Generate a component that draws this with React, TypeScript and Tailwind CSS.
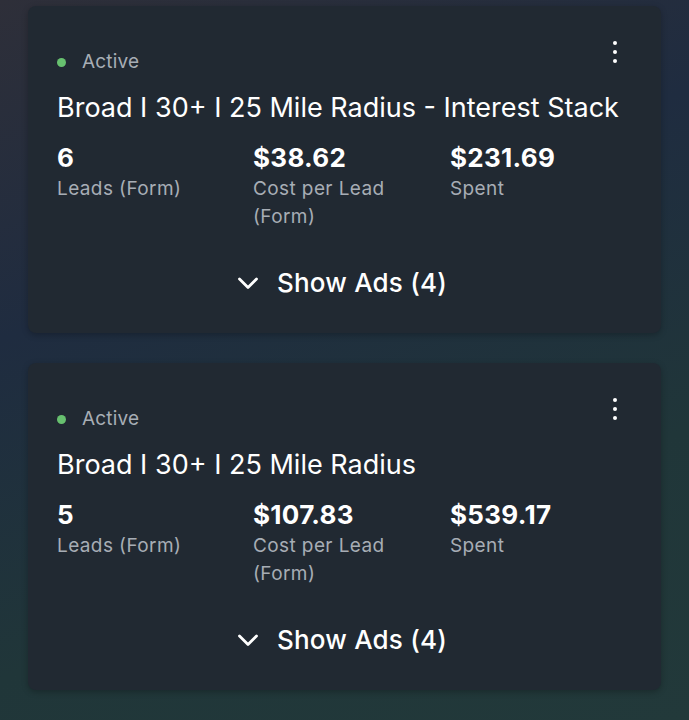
import React from "react";

function Dots() {
  return (
    <div className="absolute right-[44px] top-[35px] flex flex-col items-center gap-[5px]">
      <span className="block h-[4px] w-[4px] rounded-full bg-white" />
      <span className="block h-[4px] w-[4px] rounded-full bg-white" />
      <span className="block h-[4px] w-[4px] rounded-full bg-white" />
    </div>
  );
}

function Chevron() {
  return (
    <svg width="24" height="24" viewBox="0 0 24 24" fill="none" stroke="white" strokeWidth="2.8" strokeLinecap="round" strokeLinejoin="round">
      <path d="M3.5 8l8.5 8.5 8.5-8.5" />
    </svg>
  );
}

type Stat = { value: string; label: string[] };

function Card({ title, stats }: { title: string; stats: Stat[] }) {
  return (
    <div className="relative mx-[28px] h-[327px] rounded-[8px] bg-[#212932] pl-[29px] pt-[44px] shadow-[0_2px_6px_rgba(0,0,0,0.25)]">
      <Dots />
      <div className="flex h-[24px] items-center gap-[16px]">
        <span className="block h-[9px] w-[9px] rounded-full bg-[#67c06f]" />
        <span className="text-[19px] leading-[24px] tracking-[0.2px] text-[#a7adb5]">Active</span>
      </div>
      <div className="mt-[18px] text-[27px] leading-[32px] text-white">{title}</div>
      <div className="mt-[19px] grid grid-cols-[196px_197px_196px]">
        {stats.map((s, i) => (
          <div key={i} className="flex flex-col">
            <span className="mb-[2px] text-[26px] font-bold leading-[30px] tracking-[0.3px] text-white">{s.value}</span>
            {s.label.map((l, j) => (
              <span key={j} className="text-[19px] leading-[28px] tracking-[0.4px] text-[#a7adb5]">
                {l}
              </span>
            ))}
          </div>
        ))}
      </div>
      <div className="absolute bottom-[35px] left-0 right-0 flex items-center justify-center gap-[17px] pr-[6px]">
        <Chevron />
        <span className="text-[26px] font-medium leading-[30px] tracking-[0.2px] text-white">Show Ads (4)</span>
      </div>
    </div>
  );
}

export default function App() {
  return (
    <div
      className="flex h-[720px] w-[689px] flex-col gap-[30px] overflow-hidden bg-[linear-gradient(160deg,#2e2f39_0%,#1f2c40_35%,#203639_70%,#22393a_100%)] pt-[6px]"
      style={{ fontFamily: "Inter, 'Noto Sans', sans-serif" }}
    >
      <Card
        title="Broad I 30+ I 25 Mile Radius - Interest Stack"
        stats={[
          { value: "6", label: ["Leads (Form)"] },
          { value: "$38.62", label: ["Cost per Lead", "(Form)"] },
          { value: "$231.69", label: ["Spent"] },
        ]}
      />
      <Card
        title="Broad I 30+ I 25 Mile Radius"
        stats={[
          { value: "5", label: ["Leads (Form)"] },
          { value: "$107.83", label: ["Cost per Lead", "(Form)"] },
          { value: "$539.17", label: ["Spent"] },
        ]}
      />
    </div>
  );
}
